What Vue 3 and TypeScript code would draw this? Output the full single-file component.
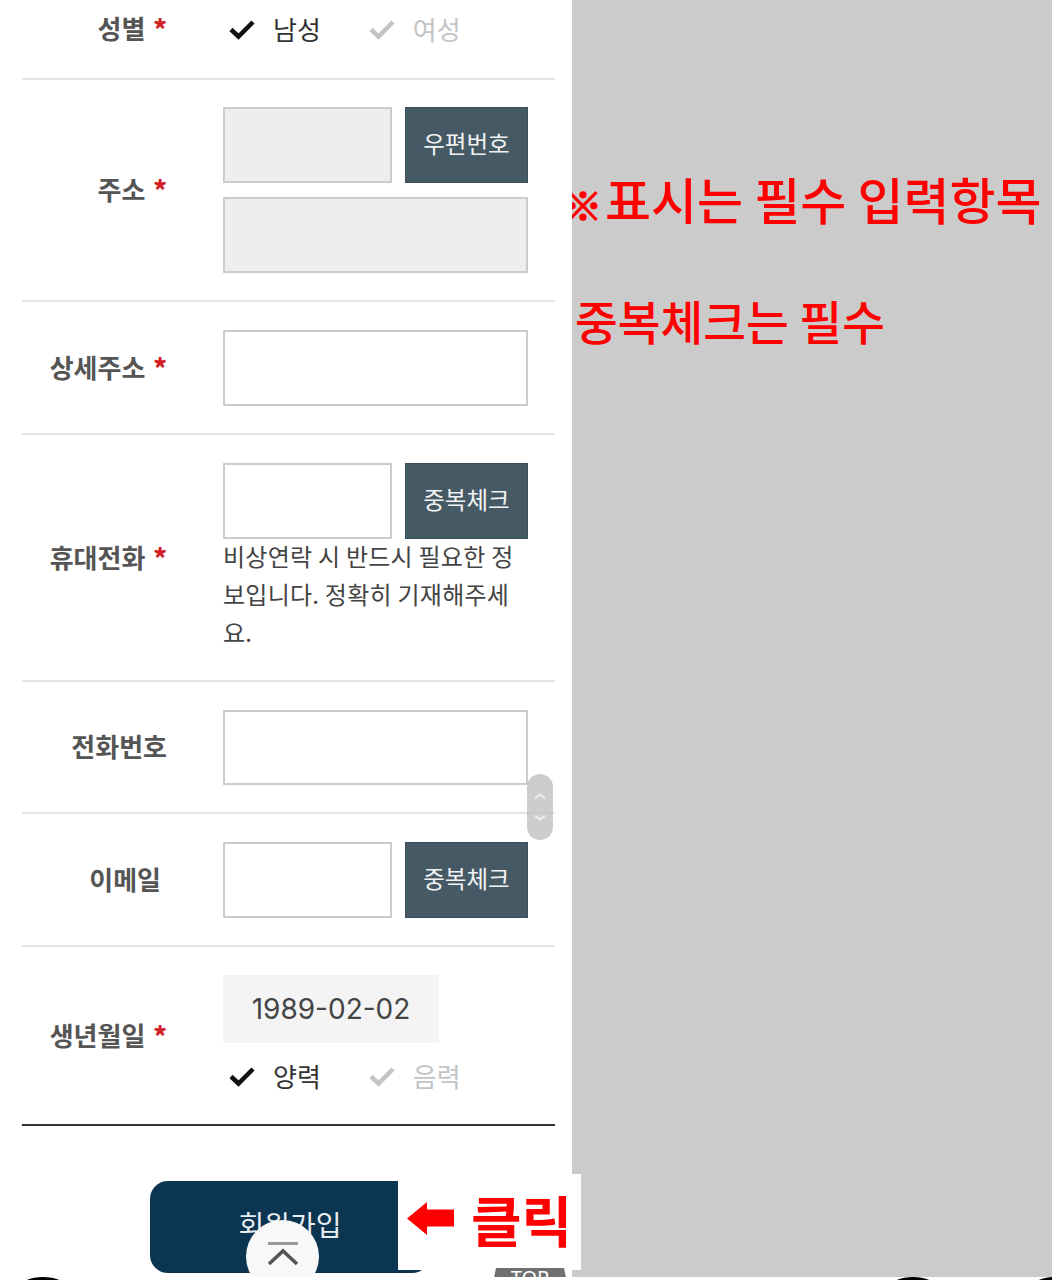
<script setup lang="ts">
type RadioOption = { label: string; checked: boolean };

const genderOptions: RadioOption[] = [
  { label: '남성', checked: true },
  { label: '여성', checked: false },
];

const calendarOptions: RadioOption[] = [
  { label: '양력', checked: true },
  { label: '음력', checked: false },
];
</script>

<template>
  <div class="page">
    <main class="form-side">
      <div class="form">
        <section class="row row--gender">
          <div class="label">성별 <em>*</em></div>
          <div class="field radios">
            <span v-for="opt in genderOptions" :key="opt.label" class="radio" :class="{ 'radio--on': opt.checked }">
              <svg viewBox="0 0 28 22" width="28" height="22" aria-hidden="true">
                <path d="M3 11.5 10.5 18.5 25 4" fill="none" stroke="currentColor" stroke-width="4.500" />
              </svg>
              <span class="radio-text">{{ opt.label }}</span>
            </span>
          </div>
        </section>

        <section class="row row--address">
          <div class="label">주소 <em>*</em></div>
          <div class="field stack">
            <div class="inline">
              <div class="input input--short input--locked"></div>
              <button class="btn" type="button">우편번호</button>
            </div>
            <div class="input input--locked"></div>
          </div>
        </section>

        <section class="row row--detail">
          <div class="label">상세주소 <em>*</em></div>
          <div class="field">
            <div class="input"></div>
          </div>
        </section>

        <section class="row row--mobile">
          <div class="label">휴대전화 <em>*</em></div>
          <div class="field">
            <div class="inline">
              <div class="input input--short"></div>
              <button class="btn" type="button">중복체크</button>
            </div>
            <p class="hint">비상연락 시 반드시 필요한 정보입니다. 정확히 기재해주세요.</p>
          </div>
        </section>

        <section class="row row--phone">
          <div class="label label--phone">전화번호</div>
          <div class="field">
            <div class="input input--thin"></div>
          </div>
        </section>

        <section class="row row--email">
          <div class="label label--email">이메일</div>
          <div class="field">
            <div class="inline">
              <div class="input input--short"></div>
              <button class="btn" type="button">중복체크</button>
            </div>
          </div>
        </section>

        <section class="row row--birth">
          <div class="label">생년월일 <em>*</em></div>
          <div class="field">
            <div class="date">1989-02-02</div>
            <div class="radios radios--birth">
              <span v-for="opt in calendarOptions" :key="opt.label" class="radio" :class="{ 'radio--on': opt.checked }">
                <svg viewBox="0 0 28 22" width="28" height="22" aria-hidden="true">
                  <path d="M3 11.5 10.5 18.5 25 4" fill="none" stroke="currentColor" stroke-width="4.500" />
                </svg>
                <span class="radio-text">{{ opt.label }}</span>
              </span>
            </div>
          </div>
        </section>

        <div class="submit-wrap">
          <button class="submit" type="button">회원가입</button>
        </div>
      </div>

      <!-- floating scroll control -->
      <div class="scroller">
        <svg viewBox="0 0 12 28" width="12" height="28" aria-hidden="true">
          <path d="M1 5.500 6 1.500 11 5.500M1 22.500 6 26.500 11 22.500" fill="none" stroke="#eeeeee" stroke-width="2" />
        </svg>
      </div>

      <button class="to-top" type="button" aria-label="맨 위로">
        <svg viewBox="0 0 34 28" width="34" height="28" aria-hidden="true">
          <path d="M2 2.500H32" stroke="#999999" stroke-width="3" />
          <path d="M3 23 17 10 31 23" fill="none" stroke="#555555" stroke-width="3.500" />
        </svg>
      </button>
    </main>

    <aside class="notes">
      <p class="note note--first"><span class="note-mark">※</span>표시는 필수 입력항목</p>
      <p class="note note--second">중복체크는 필수</p>
    </aside>

    <!-- annotation pasted over the screenshot -->
    <div class="callout">
      <svg viewBox="0 0 47 33" width="47" height="33" aria-hidden="true">
        <path d="M0 16.500 20 0V7.500H47V24.500H20V33Z" fill="#ff0000" />
      </svg>
      <span class="callout-text">클릭</span>
    </div>

    <div class="top-badge">TOP</div>

    <div class="bottom-strip">
      <i class="nav-dot nav-dot--a"></i>
      <i class="nav-dot nav-dot--b"></i>
      <i class="nav-dot nav-dot--c"></i>
    </div>
  </div>
</template>

<style scoped>
.page {
  position: relative;
  display: flex;
  width: 1052px;
  height: 1280px;
  overflow: hidden;
  background: #ffffff;
  font-family: "Noto Sans CJK KR", "Noto Sans", sans-serif;
}

.form-side {
  position: relative;
  flex: 0 0 572px;
  box-sizing: border-box;
  padding-left: 22px;
  background: #ffffff;
}

.form {
  width: 533px;
}

.row {
  display: flex;
  align-items: center;
  box-sizing: border-box;
  padding: 28px 0 27px;
  border-bottom: 2px solid #e4e4e4;
}

.row--gender {
  padding: 7px 0 27px;
}

.row--address {
  padding: 27px 0 27px;
}

.row--birth {
  padding-bottom: 26px;
  border-bottom-color: #333333;
}

.label {
  flex: 0 0 145px;
  box-sizing: border-box;
  padding-bottom: 3px;
  text-align: right;
  color: #555555;
  font-size: 26px;
  font-weight: 700;
  line-height: 38px;
  white-space: nowrap;
}

.label em {
  margin-left: 2px;
  color: #d31f26;
  font-style: normal;
  font-weight: 900;
}

.label--phone {
  flex-basis: 145px;
  margin-right: 56px;
}

.label--email {
  flex-basis: 139px;
  margin-right: 62px;
}

.field {
  flex: 0 0 305px;
  margin-left: 56px;
}

.label--phone + .field,
.label--email + .field {
  margin-left: 0;
}

.stack {
  display: flex;
  flex-direction: column;
  gap: 14px;
}

.inline {
  display: flex;
  gap: 14px;
}

.input {
  box-sizing: border-box;
  width: 305px;
  height: 76px;
  border: 2px solid #cccccc;
  background: #ffffff;
}

.input--short {
  width: 169px;
}

.inline .input--short {
  margin-right: -1px;
}

.input--thin {
  height: 75px;
}

.input--locked {
  background: #eeeeee;
}

.btn {
  flex: 0 0 123px;
  height: 76px;
  padding: 0 0 4px;
  border: 1px solid #3c4e59;
  background: #465a65;
  color: #f2f2f2;
  font-family: inherit;
  font-size: 23.5px;
}

.hint {
  margin: -2px 0 2px;
  color: #444444;
  font-size: 24px;
  letter-spacing: 0.25px;
  line-height: 38px;
  word-break: break-all;
}

.radios {
  display: flex;
  gap: 47px;
  height: 44px;
  padding-left: 5px;
}

.radios--birth {
  margin-top: 11px;
}

.radio {
  display: flex;
  align-items: center;
  gap: 17px;
  color: #c4c4c4;
  font-size: 26px;
}

.radio--on {
  color: #111111;
}

.radio-text {
  padding-bottom: 2px;
}

.radio--on .radio-text {
  color: #333333;
}

.date {
  display: flex;
  align-items: center;
  justify-content: center;
  box-sizing: border-box;
  width: 216px;
  height: 68px;
  padding-bottom: 1px;
  background: #f4f4f4;
  color: #444444;
  font-family: Inter, "Noto Sans", sans-serif;
  font-size: 28px;
}

.submit-wrap {
  padding: 55px 0 0 128px;
}

.submit {
  display: block;
  width: 280px;
  height: 92px;
  padding: 0 0 6px;
  border: 0;
  border-radius: 18px;
  background: #0b3550;
  color: #e8edf0;
  font-family: inherit;
  font-size: 28px;
}

.scroller {
  position: absolute;
  left: 527px;
  top: 774px;
  display: flex;
  align-items: center;
  justify-content: center;
  width: 26px;
  height: 66px;
  border-radius: 13px;
  background: rgb(200 200 200 / 90%);
}

.to-top {
  position: absolute;
  left: 246px;
  top: 1220px;
  display: flex;
  align-items: flex-start;
  justify-content: center;
  width: 73px;
  height: 73px;
  padding: 21px 0 0;
  border: 0;
  border-radius: 50%;
  background: #f8f8f8;
}

.notes {
  flex: 1;
  background: #cbcbcb;
  height: 1277px;
}

.note {
  margin: 0;
  color: #ff0000;
  white-space: nowrap;
}

.note--first {
  margin: 163px 0 0 -8px;
  font-size: 50px;
  font-weight: 500;
  line-height: 70px;
}

.note-mark {
  margin-right: 3px;
  font-size: 38px;
  font-weight: 700;
  -webkit-text-stroke: 1.5px #ff0000;
}

.note--second {
  margin: 46px 0 0 3px;
  font-size: 46.5px;
  font-weight: 500;
  line-height: 70px;
}

.callout {
  position: absolute;
  left: 398px;
  top: 1174px;
  display: flex;
  align-items: center;
  gap: 17px;
  box-sizing: border-box;
  width: 183px;
  height: 96px;
  padding-left: 9px;
  background: #ffffff;
  color: #ff0000;
}

.callout svg {
  margin-bottom: 7px;
}

.callout-text {
  margin-bottom: 8px;
  font-size: 55px;
  font-weight: 700;
}

.top-badge {
  position: absolute;
  left: 492px;
  top: 1268px;
  width: 76px;
  height: 20px;
  background: #707070;
  clip-path: polygon(4px 0, calc(100% - 4px) 0, 100% 100%, 0 100%);
  color: #ffffff;
  font-family: "Noto Sans", sans-serif;
  font-size: 20px;
  line-height: 20px;
  text-align: center;
}

.bottom-strip {
  position: absolute;
  left: 0;
  right: 0;
  top: 1277px;
  height: 3px;
  background: #ffffff;
  overflow: hidden;
}

.nav-dot {
  position: absolute;
  top: 0;
  width: 46px;
  height: 20px;
  border-radius: 50%;
  background: #000000;
}

.nav-dot--a {
  left: 20px;
}

.nav-dot--b {
  left: 890px;
}

.nav-dot--c {
  left: 1032px;
}
</style>
